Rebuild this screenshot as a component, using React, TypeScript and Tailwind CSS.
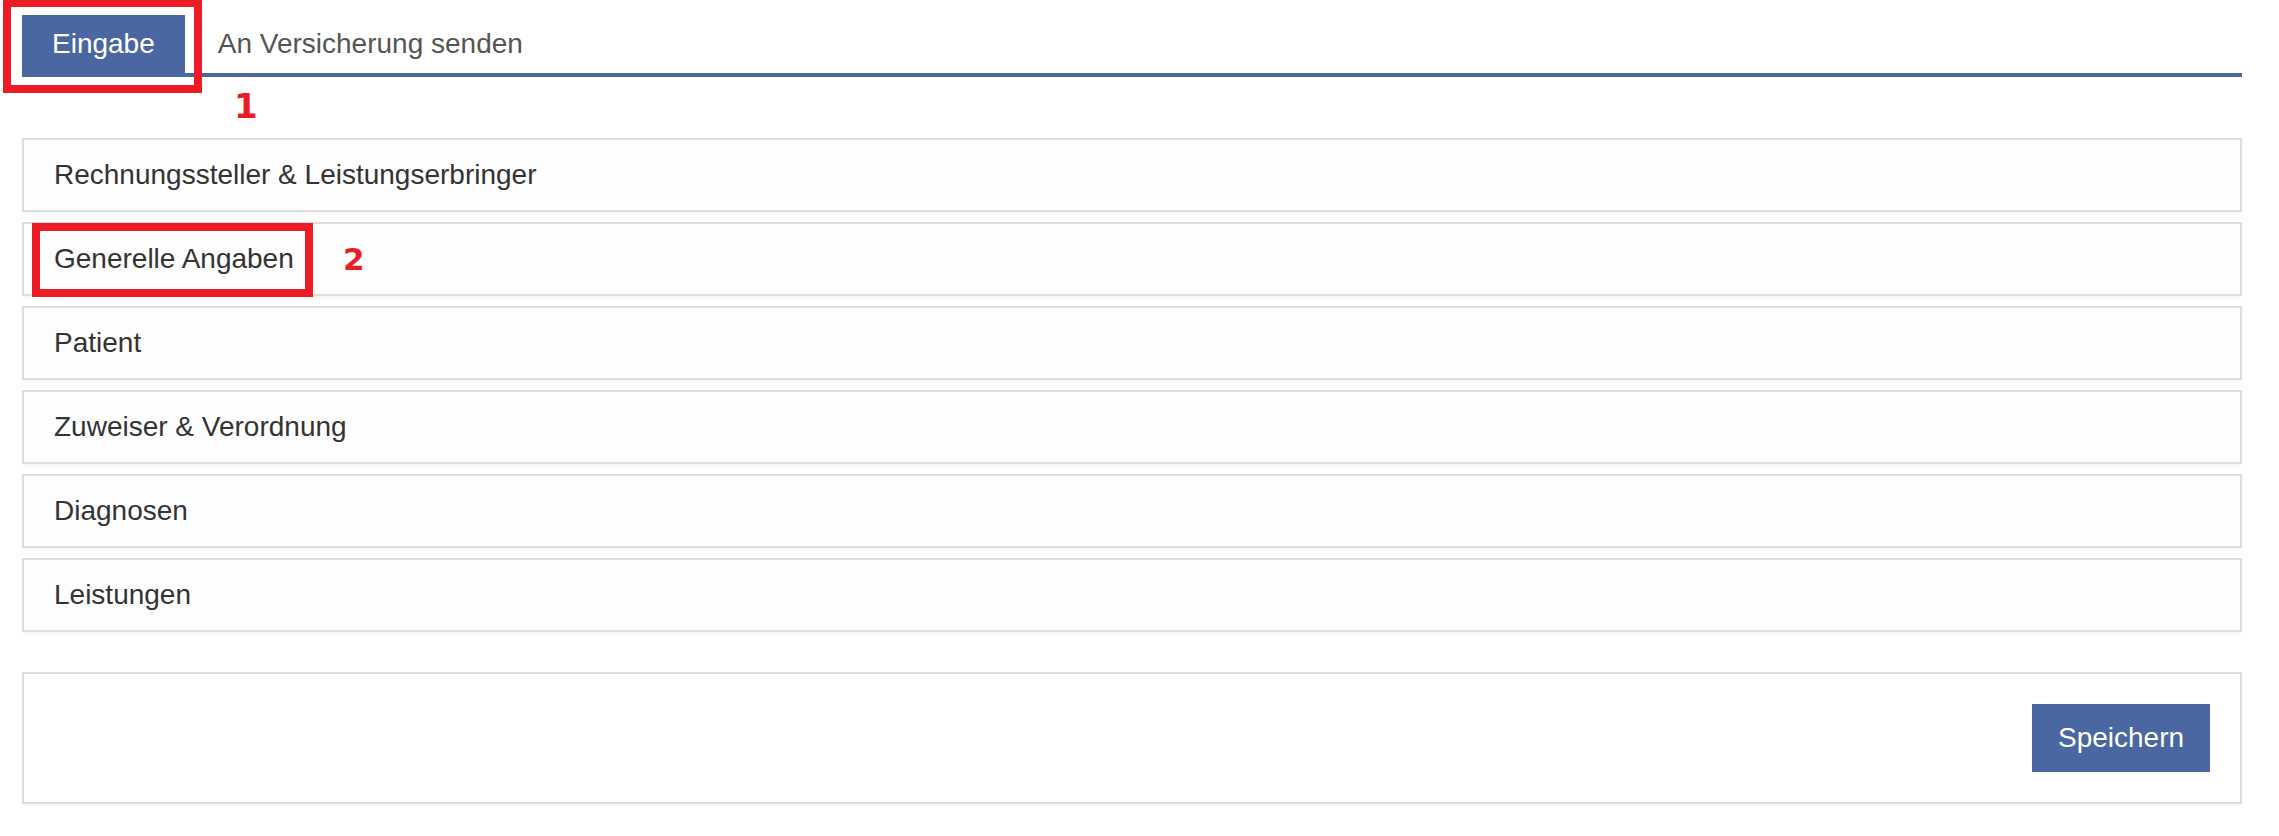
import React from "react";

const items = [
  "Rechnungssteller & Leistungserbringer",
  "Generelle Angaben",
  "Patient",
  "Zuweiser & Verordnung",
  "Diagnosen",
  "Leistungen",
];

export default function App() {
  return (
    <div className="relative w-[2279px] h-[836px] bg-white font-['Liberation_Sans',Arial,sans-serif]">
      <div className="pt-[15px] pl-[22px] w-[2242px]">
        <div className="flex border-b-4 border-[#4a67a1] h-[62px]">
          <div className="h-[62px] bg-[#4a67a1] text-white text-[28px] px-[30px] flex items-center pb-[4px]">
            Eingabe
          </div>
          <div className="h-[58px] text-[#555] text-[28px] px-[33px] flex items-center">
            An Versicherung senden
          </div>
        </div>

        <div className="mt-[61px] flex flex-col gap-[10px]">
          {items.map((t) => (
            <div
              key={t}
              className="h-[74px] border-2 border-[#dddddd] bg-[#fdfdfd] flex items-center px-[30px] text-[28px] text-[#333] shadow-[0_2px_3px_rgba(0,0,0,0.04)]"
            >
              {t}
            </div>
          ))}
        </div>

        <div className="mt-[40px] h-[132px] border-2 border-[#dddddd] bg-white flex items-center justify-end pr-[30px] shadow-[0_2px_3px_rgba(0,0,0,0.04)]">
          <button className="w-[178px] h-[68px] bg-[#4a67a1] text-white text-[28px] flex items-center justify-center">
            Speichern
          </button>
        </div>
      </div>

      {/* annotations */}
      <div className="absolute left-[3px] top-0 w-[199px] h-[93px] border-[8px] border-t-[7px] border-[#ec1c24]" />
      <div className="absolute left-[32px] top-[223px] w-[281px] h-[74px] border-[8px] border-[#ec1c24]" />
      <div className="absolute left-[234px] top-[89px] text-[34px] leading-none font-bold text-[#ec1c24] font-['DejaVu_Sans',sans-serif]">
        1
      </div>
      <div className="absolute left-[343px] top-[244px] text-[31px] leading-none font-bold text-[#ec1c24] font-['DejaVu_Sans',sans-serif]">
        2
      </div>
    </div>
  );
}
